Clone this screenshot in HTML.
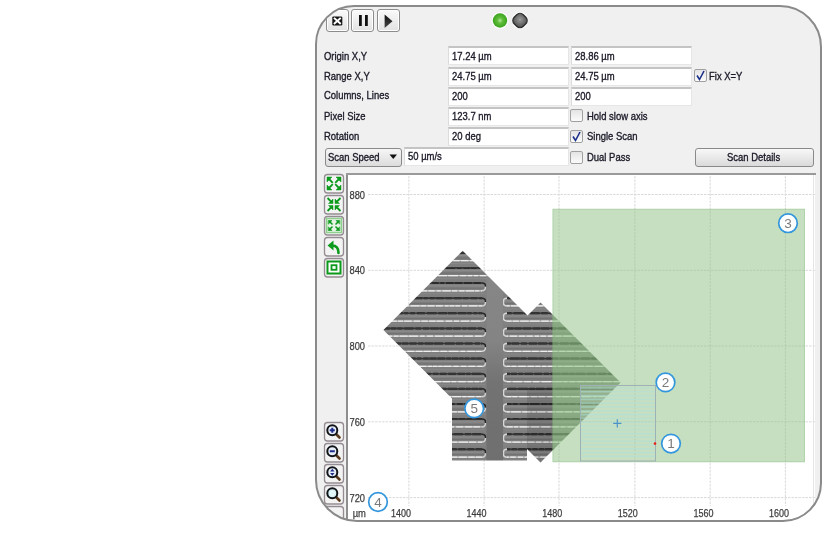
<!DOCTYPE html>
<html><head><meta charset="utf-8">
<style>
*{box-sizing:border-box}
html,body{margin:0;padding:0;background:#fff;width:840px;height:550px;overflow:hidden}
#wrap{position:absolute;left:0;top:0;width:840px;height:550px;filter:blur(0.35px)}
body{font-family:"Liberation Sans",sans-serif;position:relative}
#clip{position:absolute;left:0;top:0;width:840px;height:550px;clip-path:inset(6px 19px 29px 316px round 39px 42px 39px 42px);background:#f0f0f0}
.a{position:absolute}
.t{position:absolute;font-size:11px;line-height:11px;color:#1a1a28;-webkit-text-stroke:0.35px #1a1a28;white-space:nowrap;transform:scaleX(.86);transform-origin:0 0}
.inp{position:absolute;background:#fff;border-top:2px solid #c4c4c4;border-left:1px solid #dcdcdc;border-right:1px solid #e6e6e6;border-bottom:1px solid #e6e6e6;height:19px;width:121px}
.cb{position:absolute;width:13px;height:13px;border:1px solid #a0a0a0;border-radius:2px;background:linear-gradient(#e4e4e4,#fbfbfb)}
.btn{position:absolute;width:23px;height:23px;border:1px solid #8c8c8c;border-radius:3px;background:linear-gradient(#fafafa,#e2e2e2);box-shadow:inset 0 0 0 1px #fff}
.tb{position:absolute;left:324px;width:20px;height:19px;border:1px solid #9a8f98;border-radius:3px;background:#f4f4f4}
#frame{position:absolute;left:315px;top:5px;width:507px;height:517px;border:2px solid #8a8a8a;border-radius:39px 42px 39px 42px}
</style></head>
<body>
<div id="wrap">
<div id="clip">
  <!-- top buttons -->
  <div class="btn" style="left:326px;top:9px"></div>
  <div class="btn" style="left:351px;top:9px"></div>
  <div class="btn" style="left:377px;top:9px"></div>
  <svg class="a" style="left:326px;top:9px" width="75" height="24" viewBox="0 0 75 24">
    <defs><linearGradient id="pg" x1="0" y1="0" x2="0" y2="1"><stop offset="0" stop-color="#111"/><stop offset="1" stop-color="#444"/></linearGradient></defs>
    <rect x="6.3" y="7.4" width="10" height="9" rx="1.2" fill="#161616"/>
    <path d="M8.6 9.5 L14 14.3 M14 9.5 L8.6 14.3" stroke="#fff" stroke-width="1.9" stroke-linecap="square"/>
    <rect x="33" y="6" width="2.8" height="11" fill="#111"/>
    <rect x="39" y="6" width="2.8" height="11" fill="#111"/>
    <path d="M58.6 5.4 L66.5 12.2 L58.6 19 Z" fill="url(#pg)"/>
  </svg>
  <!-- leds -->
  <svg class="a" style="left:490px;top:10px" width="40" height="22" viewBox="0 0 40 22">
    <defs><radialGradient id="lg" cx="0.5" cy="0.5" r="0.5"><stop offset="0" stop-color="#b8e6a8"/><stop offset="0.35" stop-color="#62c03c"/><stop offset="1" stop-color="#3aa21e"/></radialGradient>
    <radialGradient id="gg" cx="0.45" cy="0.45" r="0.55"><stop offset="0" stop-color="#9a9a9a"/><stop offset="1" stop-color="#555"/></radialGradient></defs>
    <circle cx="10" cy="10.5" r="8.6" fill="#fbfbfb"/>
    <circle cx="10" cy="10.5" r="7.2" fill="url(#lg)"/>
    <circle cx="30" cy="10.5" r="8.4" fill="#fbfbfb"/>
    <rect x="23.6" y="4.1" width="12.8" height="12.8" rx="4.6" transform="rotate(45 30 10.5)" fill="url(#gg)" stroke="#2a2a2a" stroke-width="1.3"/>
  </svg>

  <!-- labels -->
  <div class="t" style="left:324px;top:50.5px">Origin X,Y</div>
  <div class="t" style="left:324px;top:70.5px">Range X,Y</div>
  <div class="t" style="left:324px;top:90px">Columns, Lines</div>
  <div class="t" style="left:324px;top:110.5px">Pixel Size</div>
  <div class="t" style="left:324px;top:130.5px">Rotation</div>

  <!-- inputs -->
  <div class="inp" style="left:448px;top:46px"></div>
  <div class="inp" style="left:571px;top:46px"></div>
  <div class="inp" style="left:448px;top:66.5px"></div>
  <div class="inp" style="left:571px;top:66.5px"></div>
  <div class="inp" style="left:448px;top:87px"></div>
  <div class="inp" style="left:571px;top:87px"></div>
  <div class="inp" style="left:448px;top:106.5px"></div>
  <div class="inp" style="left:448px;top:127px"></div>
  <div class="inp" style="left:404px;top:147px;width:165px"></div>

  <div class="t" style="left:452px;top:50.5px">17.24 µm</div>
  <div class="t" style="left:575px;top:50.5px">28.86 µm</div>
  <div class="t" style="left:452px;top:70.5px">24.75 µm</div>
  <div class="t" style="left:575px;top:70.5px">24.75 µm</div>
  <div class="t" style="left:452px;top:90.5px">200</div>
  <div class="t" style="left:575px;top:90.5px">200</div>
  <div class="t" style="left:452px;top:110.5px">123.7 nm</div>
  <div class="t" style="left:452px;top:130.5px">20 deg</div>
  <div class="t" style="left:408px;top:151px">50 µm/s</div>

  <!-- dropdown -->
  <div class="a" style="left:325px;top:147.5px;width:77px;height:19px;border:1px solid #8a8a8a;border-radius:3px;background:linear-gradient(#f6f6f6,#dcdcdc)"></div>
  <div class="t" style="left:328px;top:151.5px">Scan Speed</div>
  <svg class="a" style="left:389px;top:154px" width="9" height="6"><path d="M0.5 0.5 L8 0.5 L4.25 5 Z" fill="#111"/></svg>

  <!-- checkboxes -->
  <div class="cb" style="left:694px;top:69px"></div>
  <div class="t" style="left:709px;top:70.5px">Fix X=Y</div>
  <div class="cb" style="left:570px;top:109px"></div>
  <div class="t" style="left:587px;top:110.5px">Hold slow axis</div>
  <div class="cb" style="left:570px;top:129.5px"></div>
  <div class="t" style="left:587px;top:130.5px">Single Scan</div>
  <div class="cb" style="left:570px;top:151px"></div>
  <div class="t" style="left:587px;top:151.5px">Dual Pass</div>
  <svg class="a" style="left:694px;top:69px" width="13" height="13"><path d="M3 6.5 L5.5 10.5 L10 2" stroke="#1a2f8a" stroke-width="1.6" fill="none"/></svg>
  <svg class="a" style="left:570px;top:129.5px" width="13" height="13"><path d="M3 6.5 L5.5 10.5 L10 2" stroke="#1a2f8a" stroke-width="1.6" fill="none"/></svg>

  <!-- scan details -->
  <div class="a" style="left:695px;top:148px;width:119px;height:19px;border:1px solid #8a8a8a;border-radius:3px;background:linear-gradient(#f8f8f8,#dadada)"></div>
  <div class="t" style="left:727px;top:151.5px">Scan Details</div>

  <!-- plot separator -->
  <div class="a" style="left:346px;top:173px;width:470px;height:2px;background:#9a9a9a"></div>
  <!-- plot area -->
  <div class="a" style="left:346px;top:175px;width:469px;height:360px;background:#fff;border-left:2px solid #8e8e8e"></div>

  <!-- PLOT SVG -->
  <svg class="a" style="left:0;top:0" width="840" height="550" viewBox="0 0 840 550" id="plot">
<g stroke="#dadada" stroke-width="1" stroke-dasharray="2.5 1" fill="none">
<line x1="408.9" y1="176" x2="408.9" y2="506"/>
<line x1="484.1" y1="176" x2="484.1" y2="506"/>
<line x1="559.0" y1="176" x2="559.0" y2="506"/>
<line x1="634.9" y1="176" x2="634.9" y2="506"/>
<line x1="710.2" y1="176" x2="710.2" y2="506"/>
<line x1="785.4" y1="176" x2="785.4" y2="506"/>
<line x1="368" y1="194.5" x2="815" y2="194.5"/>
<line x1="368" y1="270.3" x2="815" y2="270.3"/>
<line x1="368" y1="346.0" x2="815" y2="346.0"/>
<line x1="368" y1="421.8" x2="815" y2="421.8"/>
<line x1="368" y1="497.6" x2="815" y2="497.6"/>
</g>
<defs><clipPath id="semclip"><polygon points="383.4,330 462.7,250.7 527.55,315.55 540.5,302.6 620.5,382.6 540.5,462.6 527,449.1 527,460.5 452,460.5 452,398.6"/></clipPath>
<filter id="bl" x="-5%" y="-5%" width="110%" height="110%"><feGaussianBlur stdDeviation="0.45"/></filter></defs>
<g clip-path="url(#semclip)"><g filter="url(#bl)">
<rect x="375" y="245" width="255" height="222" fill="#7f7f7f"/>
<rect x="375" y="254.98" width="255" height="1.2" fill="#8c8c8c"/>
<rect x="375" y="257.40" width="255" height="1.2" fill="#727272"/>
<rect x="375" y="263.00" width="255" height="1" fill="#888888"/>
<line x1="375" y1="252.78" x2="630" y2="252.78" stroke="#161616" stroke-width="2" stroke-dasharray="5.4 1.6 6.2 1.6 7.8 0.9 4.1 2.0 5.6 1.1 10.0 1.5 9.0 1.5 7.8 1.0 7.8 2.0 7.1 1.8 8.0 0.9 8.5 1.6" stroke-dashoffset="3.0"/>
<line x1="375" y1="252.78" x2="630" y2="252.78" stroke="#343434" stroke-width="1.6"/>
<line x1="375" y1="260.60" x2="630" y2="260.60" stroke="#c8c8c8" stroke-width="1.2"/>
<line x1="375" y1="260.60" x2="630" y2="260.60" stroke="#eeeeee" stroke-width="1.2" stroke-dasharray="4.2 2.0 6.8 1.8 9.3 1.8 9.5 1.4 8.8 1.4 9.6 2.0 4.6 1.0 5.3 2.2 6.6 1.7 5.8 1.5 6.3 1.3 7.5 1.6" stroke-dashoffset="9.0"/>
<rect x="375" y="270.10" width="255" height="1.2" fill="#8c8c8c"/>
<rect x="375" y="272.52" width="255" height="1.2" fill="#727272"/>
<rect x="375" y="278.12" width="255" height="1" fill="#888888"/>
<line x1="375" y1="267.90" x2="630" y2="267.90" stroke="#161616" stroke-width="2" stroke-dasharray="8.1 2.1 9.1 2.2 8.0 1.0 9.2 2.2 9.4 1.6 8.3 1.1 9.0 1.6 5.7 0.9 9.1 2.2 4.5 1.9 6.5 1.0 5.8 1.9" stroke-dashoffset="8.7"/>
<line x1="375" y1="267.90" x2="630" y2="267.90" stroke="#343434" stroke-width="1.6"/>
<line x1="375" y1="275.72" x2="630" y2="275.72" stroke="#c8c8c8" stroke-width="1.2"/>
<line x1="375" y1="275.72" x2="630" y2="275.72" stroke="#eeeeee" stroke-width="1.2" stroke-dasharray="4.3 1.7 4.3 1.8 6.0 2.0 9.9 1.5 10.0 1.2 4.5 1.6 4.2 1.1 6.4 1.7 4.9 0.9 9.2 1.2 9.8 2.1 6.3 1.4" stroke-dashoffset="5.2"/>
<rect x="375" y="285.22" width="110.5" height="1.2" fill="#8c8c8c"/>
<rect x="375" y="287.64" width="110.5" height="1.2" fill="#727272"/>
<rect x="375" y="293.24" width="110.5" height="1" fill="#888888"/>
<rect x="503.5" y="285.22" width="126.5" height="1.2" fill="#8c8c8c"/>
<rect x="503.5" y="287.64" width="126.5" height="1.2" fill="#727272"/>
<rect x="503.5" y="293.24" width="126.5" height="1" fill="#888888"/>
<line x1="375" y1="283.02" x2="482" y2="283.02" stroke="#161616" stroke-width="2" stroke-dasharray="7.9 1.6 7.4 1.7 9.6 1.5 6.6 1.8 5.4 1.2 9.9 1.5 7.3 0.8 6.5 1.6 4.1 1.7 7.8 0.9 7.8 1.5 8.1 1.3" stroke-dashoffset="7.1"/>
<line x1="375" y1="283.02" x2="482" y2="283.02" stroke="#343434" stroke-width="1.6"/>
<line x1="375" y1="290.84" x2="482" y2="290.84" stroke="#c8c8c8" stroke-width="1.2"/>
<line x1="375" y1="290.84" x2="482" y2="290.84" stroke="#eeeeee" stroke-width="1.2" stroke-dasharray="8.4 0.8 4.4 1.7 9.8 1.2 6.7 1.6 5.9 1.3 5.9 1.3 7.6 1.2 6.3 1.9 4.2 1.6 8.4 1.2 5.3 1.9 5.4 1.1" stroke-dashoffset="4.4"/>
<line x1="507" y1="283.02" x2="630" y2="283.02" stroke="#161616" stroke-width="2" stroke-dasharray="8.2 0.9 5.9 1.3 9.0 1.4 9.1 1.0 6.0 1.7 9.3 1.4 5.4 1.0 7.2 1.1 8.8 2.0 5.1 1.2 8.8 1.7 8.8 1.3" stroke-dashoffset="1.3"/>
<line x1="507" y1="283.02" x2="630" y2="283.02" stroke="#343434" stroke-width="1.6"/>
<line x1="507" y1="290.84" x2="630" y2="290.84" stroke="#c8c8c8" stroke-width="1.2"/>
<line x1="507" y1="290.84" x2="630" y2="290.84" stroke="#eeeeee" stroke-width="1.2" stroke-dasharray="5.8 1.9 5.6 1.3 6.5 1.4 6.5 2.1 4.9 0.8 9.7 2.0 9.9 1.4 9.7 2.1 5.3 1.8 9.0 1.7 7.1 1.2 6.0 1.1" stroke-dashoffset="0.7"/>
<path d="M482 283.02 Q485.5 283.02 485.5 286.02 L485.5 286.84" stroke="#262626" stroke-width="1.5" fill="none"/>
<path d="M485.5 286.84 Q485.5 290.84 482 290.84" stroke="#d0d0d0" stroke-width="1.5" fill="none"/>
<path d="M507 283.02 Q503.5 283.02 503.5 286.02 L503.5 287.84 Q503.5 290.84 507 290.84" stroke="#d6d6d6" stroke-width="1.5" fill="none"/>
<rect x="375" y="300.34" width="110.5" height="1.2" fill="#8c8c8c"/>
<rect x="375" y="302.76" width="110.5" height="1.2" fill="#727272"/>
<rect x="375" y="308.36" width="110.5" height="1" fill="#888888"/>
<rect x="503.5" y="300.34" width="126.5" height="1.2" fill="#8c8c8c"/>
<rect x="503.5" y="302.76" width="126.5" height="1.2" fill="#727272"/>
<rect x="503.5" y="308.36" width="126.5" height="1" fill="#888888"/>
<line x1="375" y1="298.14" x2="482" y2="298.14" stroke="#161616" stroke-width="2" stroke-dasharray="7.5 1.2 8.9 0.9 9.4 1.8 9.5 2.1 9.4 1.6 4.1 1.8 5.0 1.2 8.0 1.5 6.5 2.1 7.7 1.3 5.5 2.0 6.9 1.9" stroke-dashoffset="3.5"/>
<line x1="375" y1="298.14" x2="482" y2="298.14" stroke="#343434" stroke-width="1.6"/>
<line x1="375" y1="305.96" x2="482" y2="305.96" stroke="#c8c8c8" stroke-width="1.2"/>
<line x1="375" y1="305.96" x2="482" y2="305.96" stroke="#eeeeee" stroke-width="1.2" stroke-dasharray="5.2 1.5 8.9 1.0 8.8 2.1 8.8 2.0 4.0 1.7 9.2 0.9 5.6 1.2 7.2 1.4 6.8 1.9 4.0 0.9 4.8 1.0 4.4 2.2" stroke-dashoffset="8.5"/>
<line x1="507" y1="298.14" x2="630" y2="298.14" stroke="#161616" stroke-width="2" stroke-dasharray="4.5 1.5 5.9 1.2 6.1 1.7 7.5 1.3 5.1 1.3 4.7 1.6 8.3 1.3 4.5 1.0 6.2 1.6 8.7 1.3 8.8 1.7 6.6 1.3" stroke-dashoffset="5.0"/>
<line x1="507" y1="298.14" x2="630" y2="298.14" stroke="#343434" stroke-width="1.6"/>
<line x1="507" y1="305.96" x2="630" y2="305.96" stroke="#c8c8c8" stroke-width="1.2"/>
<line x1="507" y1="305.96" x2="630" y2="305.96" stroke="#eeeeee" stroke-width="1.2" stroke-dasharray="8.2 1.4 8.2 1.4 5.5 1.6 8.2 0.9 6.5 1.4 9.3 2.1 6.2 2.1 8.7 1.2 6.8 1.0 8.9 1.7 9.3 1.9 8.0 1.8" stroke-dashoffset="5.6"/>
<path d="M482 298.14 Q485.5 298.14 485.5 301.14 L485.5 301.96" stroke="#262626" stroke-width="1.5" fill="none"/>
<path d="M485.5 301.96 Q485.5 305.96 482 305.96" stroke="#d0d0d0" stroke-width="1.5" fill="none"/>
<path d="M507 298.14 Q503.5 298.14 503.5 301.14 L503.5 302.96 Q503.5 305.96 507 305.96" stroke="#d6d6d6" stroke-width="1.5" fill="none"/>
<rect x="375" y="315.46" width="110.5" height="1.2" fill="#8c8c8c"/>
<rect x="375" y="317.88" width="110.5" height="1.2" fill="#727272"/>
<rect x="375" y="323.48" width="110.5" height="1" fill="#888888"/>
<rect x="503.5" y="315.46" width="126.5" height="1.2" fill="#8c8c8c"/>
<rect x="503.5" y="317.88" width="126.5" height="1.2" fill="#727272"/>
<rect x="503.5" y="323.48" width="126.5" height="1" fill="#888888"/>
<line x1="375" y1="313.26" x2="482" y2="313.26" stroke="#161616" stroke-width="2" stroke-dasharray="4.6 1.6 4.0 1.0 8.6 0.9 4.6 0.9 9.3 1.1 4.1 2.0 4.7 2.0 8.0 2.0 9.7 1.6 8.8 0.9 8.6 1.5 8.3 0.9" stroke-dashoffset="7.5"/>
<line x1="375" y1="313.26" x2="482" y2="313.26" stroke="#343434" stroke-width="1.6"/>
<line x1="375" y1="321.08" x2="482" y2="321.08" stroke="#c8c8c8" stroke-width="1.2"/>
<line x1="375" y1="321.08" x2="482" y2="321.08" stroke="#eeeeee" stroke-width="1.2" stroke-dasharray="9.6 0.9 5.9 1.6 9.0 1.1 5.1 1.1 7.7 1.9 6.4 1.3 6.4 1.3 6.5 0.9 7.0 2.2 6.5 1.8 5.0 1.8 8.5 1.7" stroke-dashoffset="5.2"/>
<line x1="507" y1="313.26" x2="630" y2="313.26" stroke="#161616" stroke-width="2" stroke-dasharray="6.9 1.7 9.4 1.0 4.6 1.8 9.5 1.5 6.7 1.8 5.1 1.2 5.2 1.6 5.9 1.1 8.1 2.1 5.8 1.8 6.5 2.0 7.5 1.2" stroke-dashoffset="2.2"/>
<line x1="507" y1="313.26" x2="630" y2="313.26" stroke="#343434" stroke-width="1.6"/>
<line x1="507" y1="321.08" x2="630" y2="321.08" stroke="#c8c8c8" stroke-width="1.2"/>
<line x1="507" y1="321.08" x2="630" y2="321.08" stroke="#eeeeee" stroke-width="1.2" stroke-dasharray="4.1 1.5 6.3 1.0 6.2 1.3 8.6 1.0 9.9 1.5 7.6 1.5 9.0 2.0 7.3 1.5 8.3 2.0 6.4 1.8 9.8 1.5 5.4 1.1" stroke-dashoffset="7.2"/>
<path d="M482 313.26 Q485.5 313.26 485.5 316.26 L485.5 317.08" stroke="#262626" stroke-width="1.5" fill="none"/>
<path d="M485.5 317.08 Q485.5 321.08 482 321.08" stroke="#d0d0d0" stroke-width="1.5" fill="none"/>
<path d="M507 313.26 Q503.5 313.26 503.5 316.26 L503.5 318.08 Q503.5 321.08 507 321.08" stroke="#d6d6d6" stroke-width="1.5" fill="none"/>
<rect x="375" y="330.58" width="110.5" height="1.2" fill="#8c8c8c"/>
<rect x="375" y="333.00" width="110.5" height="1.2" fill="#727272"/>
<rect x="375" y="338.60" width="110.5" height="1" fill="#888888"/>
<rect x="503.5" y="330.58" width="126.5" height="1.2" fill="#8c8c8c"/>
<rect x="503.5" y="333.00" width="126.5" height="1.2" fill="#727272"/>
<rect x="503.5" y="338.60" width="126.5" height="1" fill="#888888"/>
<line x1="375" y1="328.38" x2="482" y2="328.38" stroke="#161616" stroke-width="2" stroke-dasharray="8.1 2.1 9.1 1.1 5.1 1.2 5.1 1.8 9.2 2.1 5.5 2.0 5.9 1.4 8.4 0.9 4.6 2.0 5.8 1.3 7.5 1.7 4.0 1.3" stroke-dashoffset="4.4"/>
<line x1="375" y1="328.38" x2="482" y2="328.38" stroke="#343434" stroke-width="1.6"/>
<line x1="375" y1="336.20" x2="482" y2="336.20" stroke="#c8c8c8" stroke-width="1.2"/>
<line x1="375" y1="336.20" x2="482" y2="336.20" stroke="#eeeeee" stroke-width="1.2" stroke-dasharray="6.9 1.1 7.5 2.1 6.3 1.6 4.7 1.2 8.0 1.0 9.3 2.1 4.6 2.1 6.2 1.9 8.5 1.2 8.1 1.7 8.8 1.2 8.5 2.1" stroke-dashoffset="6.7"/>
<line x1="507" y1="328.38" x2="630" y2="328.38" stroke="#161616" stroke-width="2" stroke-dasharray="7.2 1.0 7.0 1.3 8.3 1.7 7.4 1.1 7.9 1.7 5.1 2.0 7.9 1.0 9.6 1.0 6.0 1.8 7.6 1.6 7.9 1.4 5.9 1.0" stroke-dashoffset="0.7"/>
<line x1="507" y1="328.38" x2="630" y2="328.38" stroke="#343434" stroke-width="1.6"/>
<line x1="507" y1="336.20" x2="630" y2="336.20" stroke="#c8c8c8" stroke-width="1.2"/>
<line x1="507" y1="336.20" x2="630" y2="336.20" stroke="#eeeeee" stroke-width="1.2" stroke-dasharray="8.3 1.9 7.3 1.8 6.2 1.2 6.3 2.0 4.3 1.5 5.5 1.9 6.1 1.3 6.4 1.6 8.6 1.3 9.1 1.0 5.6 0.9 4.7 1.9" stroke-dashoffset="7.3"/>
<path d="M482 328.38 Q485.5 328.38 485.5 331.38 L485.5 332.20" stroke="#262626" stroke-width="1.5" fill="none"/>
<path d="M485.5 332.20 Q485.5 336.20 482 336.20" stroke="#d0d0d0" stroke-width="1.5" fill="none"/>
<path d="M507 328.38 Q503.5 328.38 503.5 331.38 L503.5 333.20 Q503.5 336.20 507 336.20" stroke="#d6d6d6" stroke-width="1.5" fill="none"/>
<rect x="375" y="345.70" width="110.5" height="1.2" fill="#8c8c8c"/>
<rect x="375" y="348.12" width="110.5" height="1.2" fill="#727272"/>
<rect x="375" y="353.72" width="110.5" height="1" fill="#888888"/>
<rect x="503.5" y="345.70" width="126.5" height="1.2" fill="#8c8c8c"/>
<rect x="503.5" y="348.12" width="126.5" height="1.2" fill="#727272"/>
<rect x="503.5" y="353.72" width="126.5" height="1" fill="#888888"/>
<line x1="375" y1="343.50" x2="482" y2="343.50" stroke="#161616" stroke-width="2" stroke-dasharray="5.1 1.1 6.5 1.8 8.9 1.8 7.6 1.0 6.4 1.1 7.2 1.6 5.2 1.2 8.7 0.8 8.8 2.0 9.7 1.3 7.3 1.6 7.8 2.2" stroke-dashoffset="6.9"/>
<line x1="375" y1="343.50" x2="482" y2="343.50" stroke="#343434" stroke-width="1.6"/>
<line x1="375" y1="351.32" x2="482" y2="351.32" stroke="#c8c8c8" stroke-width="1.2"/>
<line x1="375" y1="351.32" x2="482" y2="351.32" stroke="#eeeeee" stroke-width="1.2" stroke-dasharray="5.8 2.0 6.9 1.6 8.4 0.8 8.6 1.7 7.0 1.5 6.8 1.1 7.2 0.9 7.0 1.7 6.7 1.6 9.8 2.0 4.8 1.9 7.7 0.9" stroke-dashoffset="3.6"/>
<line x1="507" y1="343.50" x2="630" y2="343.50" stroke="#161616" stroke-width="2" stroke-dasharray="5.4 0.9 7.2 2.1 5.9 2.0 8.2 1.0 9.1 1.6 9.6 1.8 8.4 1.3 8.8 2.1 9.2 1.4 8.5 1.5 4.7 0.9 4.5 1.1" stroke-dashoffset="1.6"/>
<line x1="507" y1="343.50" x2="630" y2="343.50" stroke="#343434" stroke-width="1.6"/>
<line x1="507" y1="351.32" x2="630" y2="351.32" stroke="#c8c8c8" stroke-width="1.2"/>
<line x1="507" y1="351.32" x2="630" y2="351.32" stroke="#eeeeee" stroke-width="1.2" stroke-dasharray="7.0 1.8 7.2 1.4 7.9 1.2 6.8 1.9 6.4 1.1 9.4 1.8 6.2 1.3 7.2 1.6 5.3 0.8 5.3 1.9 4.9 1.4 5.2 1.1" stroke-dashoffset="1.7"/>
<path d="M482 343.50 Q485.5 343.50 485.5 346.50 L485.5 347.32" stroke="#262626" stroke-width="1.5" fill="none"/>
<path d="M485.5 347.32 Q485.5 351.32 482 351.32" stroke="#d0d0d0" stroke-width="1.5" fill="none"/>
<path d="M507 343.50 Q503.5 343.50 503.5 346.50 L503.5 348.32 Q503.5 351.32 507 351.32" stroke="#d6d6d6" stroke-width="1.5" fill="none"/>
<rect x="375" y="360.82" width="110.5" height="1.2" fill="#8c8c8c"/>
<rect x="375" y="363.24" width="110.5" height="1.2" fill="#727272"/>
<rect x="375" y="368.84" width="110.5" height="1" fill="#888888"/>
<rect x="503.5" y="360.82" width="126.5" height="1.2" fill="#8c8c8c"/>
<rect x="503.5" y="363.24" width="126.5" height="1.2" fill="#727272"/>
<rect x="503.5" y="368.84" width="126.5" height="1" fill="#888888"/>
<line x1="375" y1="358.62" x2="482" y2="358.62" stroke="#161616" stroke-width="2" stroke-dasharray="6.4 1.0 4.2 1.0 5.0 1.5 4.4 0.8 6.7 1.4 8.2 0.9 6.4 1.4 4.2 2.2 5.3 0.9 6.8 1.0 7.7 1.3 4.7 0.9" stroke-dashoffset="7.3"/>
<line x1="375" y1="358.62" x2="482" y2="358.62" stroke="#343434" stroke-width="1.6"/>
<line x1="375" y1="366.44" x2="482" y2="366.44" stroke="#c8c8c8" stroke-width="1.2"/>
<line x1="375" y1="366.44" x2="482" y2="366.44" stroke="#eeeeee" stroke-width="1.2" stroke-dasharray="5.7 1.9 6.8 2.1 5.8 1.1 5.6 1.9 7.8 1.3 4.6 1.8 9.8 1.6 4.0 0.8 4.5 1.0 4.2 0.9 7.9 2.1 5.2 2.2" stroke-dashoffset="4.8"/>
<line x1="507" y1="358.62" x2="630" y2="358.62" stroke="#161616" stroke-width="2" stroke-dasharray="8.8 2.1 9.6 0.8 5.8 1.6 9.7 0.9 5.8 2.0 4.7 1.3 6.0 1.8 9.6 1.0 8.4 1.8 9.0 1.6 9.5 1.3 6.5 1.1" stroke-dashoffset="7.8"/>
<line x1="507" y1="358.62" x2="630" y2="358.62" stroke="#343434" stroke-width="1.6"/>
<line x1="507" y1="366.44" x2="630" y2="366.44" stroke="#c8c8c8" stroke-width="1.2"/>
<line x1="507" y1="366.44" x2="630" y2="366.44" stroke="#eeeeee" stroke-width="1.2" stroke-dasharray="6.9 1.2 5.0 1.8 7.6 1.8 6.3 1.5 4.9 1.8 4.1 1.5 8.6 1.7 4.6 1.1 9.1 1.7 9.3 2.0 6.7 2.1 8.4 1.3" stroke-dashoffset="3.7"/>
<path d="M482 358.62 Q485.5 358.62 485.5 361.62 L485.5 362.44" stroke="#262626" stroke-width="1.5" fill="none"/>
<path d="M485.5 362.44 Q485.5 366.44 482 366.44" stroke="#d0d0d0" stroke-width="1.5" fill="none"/>
<path d="M507 358.62 Q503.5 358.62 503.5 361.62 L503.5 363.44 Q503.5 366.44 507 366.44" stroke="#d6d6d6" stroke-width="1.5" fill="none"/>
<rect x="375" y="375.94" width="110.5" height="1.2" fill="#8c8c8c"/>
<rect x="375" y="378.36" width="110.5" height="1.2" fill="#727272"/>
<rect x="375" y="383.96" width="110.5" height="1" fill="#888888"/>
<rect x="503.5" y="375.94" width="126.5" height="1.2" fill="#8c8c8c"/>
<rect x="503.5" y="378.36" width="126.5" height="1.2" fill="#727272"/>
<rect x="503.5" y="383.96" width="126.5" height="1" fill="#888888"/>
<line x1="375" y1="373.74" x2="482" y2="373.74" stroke="#161616" stroke-width="2" stroke-dasharray="4.4 1.4 9.7 0.9 7.4 1.0 4.5 1.7 5.4 0.9 4.9 1.7 7.5 0.8 5.4 2.2 5.3 1.6 6.5 1.9 7.6 1.9 7.2 1.1" stroke-dashoffset="1.8"/>
<line x1="375" y1="373.74" x2="482" y2="373.74" stroke="#343434" stroke-width="1.6"/>
<line x1="375" y1="381.56" x2="482" y2="381.56" stroke="#c8c8c8" stroke-width="1.2"/>
<line x1="375" y1="381.56" x2="482" y2="381.56" stroke="#eeeeee" stroke-width="1.2" stroke-dasharray="4.5 2.0 4.7 0.8 9.8 1.1 9.4 0.9 6.8 1.1 9.0 1.7 7.9 1.9 9.2 1.3 7.6 1.4 4.7 2.0 7.6 1.9 5.2 1.6" stroke-dashoffset="4.6"/>
<line x1="507" y1="373.74" x2="630" y2="373.74" stroke="#161616" stroke-width="2" stroke-dasharray="8.4 0.9 6.1 1.5 4.4 1.6 8.4 1.4 7.9 1.6 5.3 1.3 10.0 1.3 6.6 0.9 5.3 1.0 9.6 1.8 9.2 2.2 7.7 2.1" stroke-dashoffset="5.4"/>
<line x1="507" y1="373.74" x2="630" y2="373.74" stroke="#343434" stroke-width="1.6"/>
<line x1="507" y1="381.56" x2="630" y2="381.56" stroke="#c8c8c8" stroke-width="1.2"/>
<line x1="507" y1="381.56" x2="630" y2="381.56" stroke="#eeeeee" stroke-width="1.2" stroke-dasharray="6.5 2.1 9.4 2.1 6.9 1.9 6.4 2.2 9.5 1.2 9.6 1.1 4.6 1.8 5.8 1.5 7.8 0.9 8.5 1.2 6.6 1.3 8.5 1.8" stroke-dashoffset="2.9"/>
<path d="M482 373.74 Q485.5 373.74 485.5 376.74 L485.5 377.56" stroke="#262626" stroke-width="1.5" fill="none"/>
<path d="M485.5 377.56 Q485.5 381.56 482 381.56" stroke="#d0d0d0" stroke-width="1.5" fill="none"/>
<path d="M507 373.74 Q503.5 373.74 503.5 376.74 L503.5 378.56 Q503.5 381.56 507 381.56" stroke="#d6d6d6" stroke-width="1.5" fill="none"/>
<rect x="375" y="391.06" width="110.5" height="1.2" fill="#8c8c8c"/>
<rect x="375" y="393.48" width="110.5" height="1.2" fill="#727272"/>
<rect x="375" y="399.08" width="110.5" height="1" fill="#888888"/>
<rect x="503.5" y="391.06" width="126.5" height="1.2" fill="#8c8c8c"/>
<rect x="503.5" y="393.48" width="126.5" height="1.2" fill="#727272"/>
<rect x="503.5" y="399.08" width="126.5" height="1" fill="#888888"/>
<line x1="375" y1="388.86" x2="482" y2="388.86" stroke="#161616" stroke-width="2" stroke-dasharray="4.6 1.2 6.5 0.9 4.9 1.9 8.2 2.2 9.9 2.0 6.2 1.0 5.9 1.4 7.2 1.6 6.2 2.0 5.7 1.4 9.3 1.9 5.8 1.1" stroke-dashoffset="8.1"/>
<line x1="375" y1="388.86" x2="482" y2="388.86" stroke="#343434" stroke-width="1.6"/>
<line x1="375" y1="396.68" x2="482" y2="396.68" stroke="#c8c8c8" stroke-width="1.2"/>
<line x1="375" y1="396.68" x2="482" y2="396.68" stroke="#eeeeee" stroke-width="1.2" stroke-dasharray="4.1 1.0 7.2 1.6 5.0 0.9 5.2 1.9 6.8 2.2 8.7 2.2 4.2 1.1 4.1 1.4 6.0 0.9 7.3 0.9 5.9 1.1 8.8 1.4" stroke-dashoffset="2.6"/>
<line x1="507" y1="388.86" x2="630" y2="388.86" stroke="#161616" stroke-width="2" stroke-dasharray="4.3 1.4 7.8 1.7 9.5 1.9 5.5 1.0 8.5 1.9 7.1 2.0 7.3 1.2 5.0 0.8 7.9 2.1 9.4 1.5 8.0 2.1 8.9 1.6" stroke-dashoffset="4.1"/>
<line x1="507" y1="388.86" x2="630" y2="388.86" stroke="#343434" stroke-width="1.6"/>
<line x1="507" y1="396.68" x2="630" y2="396.68" stroke="#c8c8c8" stroke-width="1.2"/>
<line x1="507" y1="396.68" x2="630" y2="396.68" stroke="#eeeeee" stroke-width="1.2" stroke-dasharray="7.1 1.0 5.1 1.8 10.0 1.6 6.4 1.3 6.7 1.9 6.7 2.1 4.9 1.2 7.1 1.4 9.1 2.0 9.6 1.7 4.2 1.6 7.3 1.5" stroke-dashoffset="2.8"/>
<path d="M482 388.86 Q485.5 388.86 485.5 391.86 L485.5 392.68" stroke="#262626" stroke-width="1.5" fill="none"/>
<path d="M485.5 392.68 Q485.5 396.68 482 396.68" stroke="#d0d0d0" stroke-width="1.5" fill="none"/>
<path d="M507 388.86 Q503.5 388.86 503.5 391.86 L503.5 393.68 Q503.5 396.68 507 396.68" stroke="#d6d6d6" stroke-width="1.5" fill="none"/>
<rect x="375" y="406.18" width="110.5" height="1.2" fill="#8c8c8c"/>
<rect x="375" y="408.60" width="110.5" height="1.2" fill="#727272"/>
<rect x="375" y="414.20" width="110.5" height="1" fill="#888888"/>
<rect x="503.5" y="406.18" width="126.5" height="1.2" fill="#8c8c8c"/>
<rect x="503.5" y="408.60" width="126.5" height="1.2" fill="#727272"/>
<rect x="503.5" y="414.20" width="126.5" height="1" fill="#888888"/>
<line x1="375" y1="403.98" x2="482" y2="403.98" stroke="#161616" stroke-width="2" stroke-dasharray="8.3 2.1 4.6 1.7 6.2 1.5 9.4 2.1 7.9 1.1 9.5 1.1 6.3 2.0 5.9 1.2 9.7 2.1 5.9 1.3 5.7 1.0 5.5 2.2" stroke-dashoffset="0.8"/>
<line x1="375" y1="403.98" x2="482" y2="403.98" stroke="#343434" stroke-width="1.6"/>
<line x1="375" y1="411.80" x2="482" y2="411.80" stroke="#c8c8c8" stroke-width="1.2"/>
<line x1="375" y1="411.80" x2="482" y2="411.80" stroke="#eeeeee" stroke-width="1.2" stroke-dasharray="5.4 1.1 4.5 1.5 8.5 2.0 7.8 1.9 4.0 1.2 9.8 0.9 5.6 1.5 5.6 1.6 4.3 1.1 9.7 1.0 9.4 1.0 10.0 1.7" stroke-dashoffset="6.5"/>
<line x1="507" y1="403.98" x2="630" y2="403.98" stroke="#161616" stroke-width="2" stroke-dasharray="4.9 0.9 8.6 1.0 5.1 2.0 9.2 0.9 9.8 1.5 6.3 0.9 6.3 2.2 5.7 1.0 4.9 1.0 6.1 2.1 4.5 1.1 9.6 2.2" stroke-dashoffset="9.8"/>
<line x1="507" y1="403.98" x2="630" y2="403.98" stroke="#343434" stroke-width="1.6"/>
<line x1="507" y1="411.80" x2="630" y2="411.80" stroke="#c8c8c8" stroke-width="1.2"/>
<line x1="507" y1="411.80" x2="630" y2="411.80" stroke="#eeeeee" stroke-width="1.2" stroke-dasharray="5.5 1.3 9.7 1.5 8.2 1.2 4.1 1.3 8.5 1.9 7.4 1.4 7.2 1.4 7.2 2.0 5.2 1.6 9.6 2.0 5.1 2.1 9.0 1.0" stroke-dashoffset="2.7"/>
<path d="M482 403.98 Q485.5 403.98 485.5 406.98 L485.5 407.80" stroke="#262626" stroke-width="1.5" fill="none"/>
<path d="M485.5 407.80 Q485.5 411.80 482 411.80" stroke="#d0d0d0" stroke-width="1.5" fill="none"/>
<path d="M507 403.98 Q503.5 403.98 503.5 406.98 L503.5 408.80 Q503.5 411.80 507 411.80" stroke="#d6d6d6" stroke-width="1.5" fill="none"/>
<rect x="375" y="421.30" width="110.5" height="1.2" fill="#8c8c8c"/>
<rect x="375" y="423.72" width="110.5" height="1.2" fill="#727272"/>
<rect x="375" y="429.32" width="110.5" height="1" fill="#888888"/>
<rect x="503.5" y="421.30" width="126.5" height="1.2" fill="#8c8c8c"/>
<rect x="503.5" y="423.72" width="126.5" height="1.2" fill="#727272"/>
<rect x="503.5" y="429.32" width="126.5" height="1" fill="#888888"/>
<line x1="375" y1="419.10" x2="482" y2="419.10" stroke="#161616" stroke-width="2" stroke-dasharray="5.2 0.9 9.9 1.4 9.2 1.0 4.1 2.0 8.8 2.2 8.1 1.5 8.6 0.9 7.2 1.4 4.9 1.6 5.9 1.5 6.2 1.2 6.2 1.6" stroke-dashoffset="9.8"/>
<line x1="375" y1="419.10" x2="482" y2="419.10" stroke="#343434" stroke-width="1.6"/>
<line x1="375" y1="426.92" x2="482" y2="426.92" stroke="#c8c8c8" stroke-width="1.2"/>
<line x1="375" y1="426.92" x2="482" y2="426.92" stroke="#eeeeee" stroke-width="1.2" stroke-dasharray="9.6 2.0 9.0 1.2 9.9 1.2 4.7 1.5 8.4 1.3 7.9 1.2 9.8 1.4 6.9 1.5 9.2 2.2 7.2 1.4 7.7 0.9 6.6 2.0" stroke-dashoffset="7.8"/>
<line x1="507" y1="419.10" x2="630" y2="419.10" stroke="#161616" stroke-width="2" stroke-dasharray="4.4 2.0 6.3 2.2 6.2 1.1 7.3 2.0 6.6 2.0 8.3 1.3 5.8 1.5 6.4 1.3 7.9 2.0 7.5 1.0 5.3 1.3 7.7 1.0" stroke-dashoffset="0.8"/>
<line x1="507" y1="419.10" x2="630" y2="419.10" stroke="#343434" stroke-width="1.6"/>
<line x1="507" y1="426.92" x2="630" y2="426.92" stroke="#c8c8c8" stroke-width="1.2"/>
<line x1="507" y1="426.92" x2="630" y2="426.92" stroke="#eeeeee" stroke-width="1.2" stroke-dasharray="5.9 1.2 4.2 1.6 9.5 1.5 8.4 2.0 9.0 2.1 6.6 1.8 4.7 2.0 6.3 1.5 9.3 1.2 5.1 2.0 7.6 0.9 4.2 1.3" stroke-dashoffset="0.1"/>
<path d="M482 419.10 Q485.5 419.10 485.5 422.10 L485.5 422.92" stroke="#262626" stroke-width="1.5" fill="none"/>
<path d="M485.5 422.92 Q485.5 426.92 482 426.92" stroke="#d0d0d0" stroke-width="1.5" fill="none"/>
<path d="M507 419.10 Q503.5 419.10 503.5 422.10 L503.5 423.92 Q503.5 426.92 507 426.92" stroke="#d6d6d6" stroke-width="1.5" fill="none"/>
<rect x="375" y="436.42" width="110.5" height="1.2" fill="#8c8c8c"/>
<rect x="375" y="438.84" width="110.5" height="1.2" fill="#727272"/>
<rect x="375" y="444.44" width="110.5" height="1" fill="#888888"/>
<rect x="503.5" y="436.42" width="126.5" height="1.2" fill="#8c8c8c"/>
<rect x="503.5" y="438.84" width="126.5" height="1.2" fill="#727272"/>
<rect x="503.5" y="444.44" width="126.5" height="1" fill="#888888"/>
<line x1="375" y1="434.22" x2="482" y2="434.22" stroke="#161616" stroke-width="2" stroke-dasharray="9.0 1.1 5.6 1.3 7.1 1.4 7.8 1.7 6.6 0.9 9.9 1.8 4.5 1.4 8.5 2.2 4.4 0.8 6.9 1.4 9.4 2.0 6.0 1.4" stroke-dashoffset="5.8"/>
<line x1="375" y1="434.22" x2="482" y2="434.22" stroke="#343434" stroke-width="1.6"/>
<line x1="375" y1="442.04" x2="482" y2="442.04" stroke="#c8c8c8" stroke-width="1.2"/>
<line x1="375" y1="442.04" x2="482" y2="442.04" stroke="#eeeeee" stroke-width="1.2" stroke-dasharray="9.3 1.1 6.4 0.9 7.8 0.8 9.6 1.5 7.4 0.9 5.4 1.5 9.1 1.6 5.7 2.2 8.0 1.5 5.2 1.2 9.4 1.0 7.2 1.7" stroke-dashoffset="3.5"/>
<line x1="507" y1="434.22" x2="630" y2="434.22" stroke="#161616" stroke-width="2" stroke-dasharray="8.6 2.1 9.1 1.8 5.2 0.9 6.6 1.2 5.2 2.0 5.3 2.0 9.6 1.0 9.5 1.4 5.3 1.1 4.2 1.5 6.3 2.0 9.0 0.9" stroke-dashoffset="4.0"/>
<line x1="507" y1="434.22" x2="630" y2="434.22" stroke="#343434" stroke-width="1.6"/>
<line x1="507" y1="442.04" x2="630" y2="442.04" stroke="#c8c8c8" stroke-width="1.2"/>
<line x1="507" y1="442.04" x2="630" y2="442.04" stroke="#eeeeee" stroke-width="1.2" stroke-dasharray="6.3 1.0 5.5 1.2 8.2 1.3 4.7 1.1 6.7 1.6 5.5 1.8 5.3 1.7 7.7 1.0 8.5 1.4 7.2 1.6 7.8 1.4 4.3 1.9" stroke-dashoffset="8.6"/>
<path d="M482 434.22 Q485.5 434.22 485.5 437.22 L485.5 438.04" stroke="#262626" stroke-width="1.5" fill="none"/>
<path d="M485.5 438.04 Q485.5 442.04 482 442.04" stroke="#d0d0d0" stroke-width="1.5" fill="none"/>
<path d="M507 434.22 Q503.5 434.22 503.5 437.22 L503.5 439.04 Q503.5 442.04 507 442.04" stroke="#d6d6d6" stroke-width="1.5" fill="none"/>
<rect x="375" y="451.54" width="110.5" height="1.2" fill="#8c8c8c"/>
<rect x="375" y="453.96" width="110.5" height="1.2" fill="#727272"/>
<rect x="375" y="459.56" width="110.5" height="1" fill="#888888"/>
<rect x="503.5" y="451.54" width="126.5" height="1.2" fill="#8c8c8c"/>
<rect x="503.5" y="453.96" width="126.5" height="1.2" fill="#727272"/>
<rect x="503.5" y="459.56" width="126.5" height="1" fill="#888888"/>
<line x1="375" y1="449.34" x2="482" y2="449.34" stroke="#161616" stroke-width="2" stroke-dasharray="6.9 1.6 5.6 2.1 8.1 1.1 8.9 2.2 6.1 2.2 6.9 1.1 8.3 1.3 8.4 1.6 4.6 1.5 9.1 1.5 7.2 2.0 6.7 1.5" stroke-dashoffset="5.8"/>
<line x1="375" y1="449.34" x2="482" y2="449.34" stroke="#343434" stroke-width="1.6"/>
<line x1="375" y1="457.16" x2="482" y2="457.16" stroke="#c8c8c8" stroke-width="1.2"/>
<line x1="375" y1="457.16" x2="482" y2="457.16" stroke="#eeeeee" stroke-width="1.2" stroke-dasharray="8.9 1.1 4.6 1.9 7.3 1.2 9.4 2.0 7.2 2.2 9.0 1.8 5.7 0.8 8.1 1.8 6.1 1.5 7.4 1.1 8.2 1.6 6.3 1.0" stroke-dashoffset="5.5"/>
<line x1="507" y1="449.34" x2="630" y2="449.34" stroke="#161616" stroke-width="2" stroke-dasharray="5.9 1.8 5.0 1.4 5.2 1.4 7.5 0.9 4.3 1.5 5.2 1.5 5.0 0.9 7.2 2.1 9.2 1.5 6.4 0.9 5.7 1.2 9.6 1.0" stroke-dashoffset="9.5"/>
<line x1="507" y1="449.34" x2="630" y2="449.34" stroke="#343434" stroke-width="1.6"/>
<line x1="507" y1="457.16" x2="630" y2="457.16" stroke="#c8c8c8" stroke-width="1.2"/>
<line x1="507" y1="457.16" x2="630" y2="457.16" stroke="#eeeeee" stroke-width="1.2" stroke-dasharray="6.9 1.4 5.6 2.1 5.1 1.6 7.1 1.1 5.3 2.2 8.7 1.8 9.4 0.9 8.2 1.9 5.4 1.4 9.8 1.3 8.6 1.0 8.0 1.2" stroke-dashoffset="5.1"/>
<path d="M482 449.34 Q485.5 449.34 485.5 452.34 L485.5 453.16" stroke="#262626" stroke-width="1.5" fill="none"/>
<path d="M485.5 453.16 Q485.5 457.16 482 457.16" stroke="#d0d0d0" stroke-width="1.5" fill="none"/>
<path d="M507 449.34 Q503.5 449.34 503.5 452.34 L503.5 454.16 Q503.5 457.16 507 457.16" stroke="#d6d6d6" stroke-width="1.5" fill="none"/>
<rect x="375" y="466.66" width="110.5" height="1.2" fill="#8c8c8c"/>
<rect x="375" y="469.08" width="110.5" height="1.2" fill="#727272"/>
<rect x="375" y="474.68" width="110.5" height="1" fill="#888888"/>
<rect x="503.5" y="466.66" width="126.5" height="1.2" fill="#8c8c8c"/>
<rect x="503.5" y="469.08" width="126.5" height="1.2" fill="#727272"/>
<rect x="503.5" y="474.68" width="126.5" height="1" fill="#888888"/>
<line x1="375" y1="464.46" x2="482" y2="464.46" stroke="#161616" stroke-width="2" stroke-dasharray="6.2 2.0 8.5 1.5 8.1 1.4 8.8 1.2 7.3 1.6 6.3 0.9 5.0 1.7 5.3 1.9 7.0 2.1 9.1 1.8 6.2 0.9 7.3 1.8" stroke-dashoffset="9.2"/>
<line x1="375" y1="464.46" x2="482" y2="464.46" stroke="#343434" stroke-width="1.6"/>
<line x1="375" y1="472.28" x2="482" y2="472.28" stroke="#c8c8c8" stroke-width="1.2"/>
<line x1="375" y1="472.28" x2="482" y2="472.28" stroke="#eeeeee" stroke-width="1.2" stroke-dasharray="5.2 1.0 9.9 1.8 6.9 1.8 4.9 1.6 8.0 1.6 5.0 1.0 7.7 2.0 4.8 0.8 4.5 1.9 6.3 1.4 10.0 1.7 5.6 1.8" stroke-dashoffset="0.0"/>
<line x1="507" y1="464.46" x2="630" y2="464.46" stroke="#161616" stroke-width="2" stroke-dasharray="5.7 1.8 5.0 0.8 7.1 1.3 9.8 0.9 8.8 1.3 8.8 1.4 8.0 1.3 5.3 1.4 8.8 1.3 5.4 1.4 4.6 1.2 7.4 1.6" stroke-dashoffset="6.0"/>
<line x1="507" y1="464.46" x2="630" y2="464.46" stroke="#343434" stroke-width="1.6"/>
<line x1="507" y1="472.28" x2="630" y2="472.28" stroke="#c8c8c8" stroke-width="1.2"/>
<line x1="507" y1="472.28" x2="630" y2="472.28" stroke="#eeeeee" stroke-width="1.2" stroke-dasharray="5.7 0.8 4.2 1.3 5.2 1.6 5.6 1.9 7.6 1.7 8.4 1.5 6.6 1.2 4.4 1.9 7.0 0.9 9.6 1.6 7.7 1.4 4.8 2.2" stroke-dashoffset="1.7"/>
<path d="M482 464.46 Q485.5 464.46 485.5 467.46 L485.5 468.28" stroke="#262626" stroke-width="1.5" fill="none"/>
<path d="M485.5 468.28 Q485.5 472.28 482 472.28" stroke="#d0d0d0" stroke-width="1.5" fill="none"/>
<path d="M507 464.46 Q503.5 464.46 503.5 467.46 L503.5 469.28 Q503.5 472.28 507 472.28" stroke="#d6d6d6" stroke-width="1.5" fill="none"/>
<rect x="375" y="481.78" width="110.5" height="1.2" fill="#8c8c8c"/>
<rect x="375" y="484.20" width="110.5" height="1.2" fill="#727272"/>
<rect x="375" y="489.80" width="110.5" height="1" fill="#888888"/>
<rect x="503.5" y="481.78" width="126.5" height="1.2" fill="#8c8c8c"/>
<rect x="503.5" y="484.20" width="126.5" height="1.2" fill="#727272"/>
<rect x="503.5" y="489.80" width="126.5" height="1" fill="#888888"/>
<line x1="375" y1="479.58" x2="482" y2="479.58" stroke="#161616" stroke-width="2" stroke-dasharray="6.2 2.2 4.7 1.5 6.9 1.1 9.5 1.4 4.1 1.5 4.0 1.8 9.2 2.1 4.3 1.7 5.8 1.5 5.8 1.2 4.8 1.7 4.5 2.1" stroke-dashoffset="0.4"/>
<line x1="375" y1="479.58" x2="482" y2="479.58" stroke="#343434" stroke-width="1.6"/>
<line x1="375" y1="487.40" x2="482" y2="487.40" stroke="#c8c8c8" stroke-width="1.2"/>
<line x1="375" y1="487.40" x2="482" y2="487.40" stroke="#eeeeee" stroke-width="1.2" stroke-dasharray="9.8 1.1 4.5 1.8 7.2 1.9 7.1 1.7 4.5 1.7 7.1 2.1 4.0 0.9 8.1 2.1 6.5 1.8 7.4 1.3 6.8 1.6 4.2 1.2" stroke-dashoffset="7.4"/>
<line x1="507" y1="479.58" x2="630" y2="479.58" stroke="#161616" stroke-width="2" stroke-dasharray="5.5 1.5 5.5 1.3 7.9 1.8 9.7 1.5 5.2 1.3 4.4 1.1 7.5 1.7 5.4 1.1 4.6 1.1 7.0 1.2 9.3 1.6 6.0 1.4" stroke-dashoffset="0.4"/>
<line x1="507" y1="479.58" x2="630" y2="479.58" stroke="#343434" stroke-width="1.6"/>
<line x1="507" y1="487.40" x2="630" y2="487.40" stroke="#c8c8c8" stroke-width="1.2"/>
<line x1="507" y1="487.40" x2="630" y2="487.40" stroke="#eeeeee" stroke-width="1.2" stroke-dasharray="8.4 1.9 6.2 1.8 5.6 1.1 5.4 1.1 7.6 1.7 8.4 0.9 8.6 1.5 6.3 1.5 6.6 1.1 6.4 1.7 8.3 2.1 5.2 2.0" stroke-dashoffset="8.0"/>
<path d="M482 479.58 Q485.5 479.58 485.5 482.58 L485.5 483.40" stroke="#262626" stroke-width="1.5" fill="none"/>
<path d="M485.5 483.40 Q485.5 487.40 482 487.40" stroke="#d0d0d0" stroke-width="1.5" fill="none"/>
<path d="M507 479.58 Q503.5 479.58 503.5 482.58 L503.5 484.40 Q503.5 487.40 507 487.40" stroke="#d6d6d6" stroke-width="1.5" fill="none"/>
<defs><linearGradient id="barg" x1="0" y1="0" x2="0" y2="1"><stop offset="0" stop-color="#868686"/><stop offset="0.33" stop-color="#848484"/><stop offset="0.55" stop-color="#737373"/><stop offset="1" stop-color="#6e6e6e"/></linearGradient></defs>
<rect x="486.5" y="277" width="16.5" height="190" fill="url(#barg)"/>
<rect x="527" y="388" width="26" height="76" fill="#000" fill-opacity="0.1"/>
</g></g>
<rect x="552.5" y="208.8" width="252.5" height="253.4" fill="rgb(139,191,129)" fill-opacity="0.5"/>
<g clip-path="url(#semclip)"><rect x="552.5" y="290" width="70" height="175" fill="rgb(150,215,135)" fill-opacity="0.16"/></g>
<rect x="553" y="209.3" width="251.5" height="252.4" fill="none" stroke="rgb(120,175,110)" stroke-opacity="0.25" stroke-width="1"/>
<line x1="813.5" y1="175" x2="813.5" y2="530" stroke="#e4e4e4" stroke-width="1"/>
<rect x="580.5" y="385.5" width="75" height="75.5" fill="rgb(215,220,195)" fill-opacity="0.2"/>
<g stroke="rgb(168,228,226)" stroke-width="1.6" opacity="0.48">
<line x1="581" y1="388.0" x2="655" y2="388.0"/>
<line x1="581" y1="391.8" x2="655" y2="391.8"/>
<line x1="581" y1="395.6" x2="655" y2="395.6"/>
<line x1="581" y1="399.4" x2="655" y2="399.4"/>
<line x1="581" y1="403.2" x2="655" y2="403.2"/>
<line x1="581" y1="407.0" x2="655" y2="407.0"/>
<line x1="581" y1="410.8" x2="655" y2="410.8"/>
<line x1="581" y1="414.6" x2="655" y2="414.6"/>
<line x1="581" y1="418.4" x2="655" y2="418.4"/>
<line x1="581" y1="422.2" x2="655" y2="422.2"/>
<line x1="581" y1="426.0" x2="655" y2="426.0"/>
<line x1="581" y1="429.8" x2="655" y2="429.8"/>
<line x1="581" y1="433.6" x2="655" y2="433.6"/>
<line x1="581" y1="437.4" x2="655" y2="437.4"/>
<line x1="581" y1="441.2" x2="655" y2="441.2"/>
<line x1="581" y1="445.0" x2="655" y2="445.0"/>
<line x1="581" y1="448.8" x2="655" y2="448.8"/>
<line x1="581" y1="452.6" x2="655" y2="452.6"/>
<line x1="581" y1="456.4" x2="655" y2="456.4"/>
</g>
<rect x="580.5" y="385.5" width="75" height="75.5" fill="none" stroke="#9db2b4" stroke-width="1"/>
<path d="M613.2 423.3 H621.4 M617.3 419.2 V427.4" stroke="#4d93c8" stroke-width="1.2"/>
<circle cx="655" cy="443.6" r="1.3" fill="#e8201c"/>
<circle cx="671" cy="443.6" r="9.3" fill="#fff" stroke="#3496dc" stroke-width="1.7"/>
<text x="671" y="448.20000000000005" text-anchor="middle" font-family="Liberation Sans" font-size="13.5" fill="#7a7a7a">1</text>
<circle cx="665.5" cy="382.4" r="9.3" fill="#fff" stroke="#3496dc" stroke-width="1.7"/>
<text x="665.5" y="387.0" text-anchor="middle" font-family="Liberation Sans" font-size="13.5" fill="#7a7a7a">2</text>
<circle cx="788" cy="223.2" r="9.3" fill="#fff" stroke="#3496dc" stroke-width="1.7"/>
<text x="788" y="227.79999999999998" text-anchor="middle" font-family="Liberation Sans" font-size="13.5" fill="#7a7a7a">3</text>
<circle cx="378" cy="502" r="9.3" fill="#fff" stroke="#3496dc" stroke-width="1.7"/>
<text x="378" y="506.6" text-anchor="middle" font-family="Liberation Sans" font-size="13.5" fill="#7a7a7a">4</text>
<circle cx="474.2" cy="408.4" r="9.3" fill="#fff" stroke="#3496dc" stroke-width="1.7"/>
<text x="474.2" y="413.0" text-anchor="middle" font-family="Liberation Sans" font-size="13.5" fill="#7a7a7a">5</text>
<text x="349.5" y="198.5" font-family="Liberation Sans" font-size="11" fill="#3c3c3c" stroke="#3c3c3c" stroke-width="0.25" textLength="15.5" lengthAdjust="spacingAndGlyphs">880</text>
<text x="349.5" y="274.3" font-family="Liberation Sans" font-size="11" fill="#3c3c3c" stroke="#3c3c3c" stroke-width="0.25" textLength="15.5" lengthAdjust="spacingAndGlyphs">840</text>
<text x="349.5" y="350.0" font-family="Liberation Sans" font-size="11" fill="#3c3c3c" stroke="#3c3c3c" stroke-width="0.25" textLength="15.5" lengthAdjust="spacingAndGlyphs">800</text>
<text x="349.5" y="425.8" font-family="Liberation Sans" font-size="11" fill="#3c3c3c" stroke="#3c3c3c" stroke-width="0.25" textLength="15.5" lengthAdjust="spacingAndGlyphs">760</text>
<text x="349.5" y="501.6" font-family="Liberation Sans" font-size="11" fill="#3c3c3c" stroke="#3c3c3c" stroke-width="0.25" textLength="15.5" lengthAdjust="spacingAndGlyphs">720</text>
<text x="391.0" y="517" font-family="Liberation Sans" font-size="11" fill="#3c3c3c" stroke="#3c3c3c" stroke-width="0.25" textLength="20" lengthAdjust="spacingAndGlyphs">1400</text>
<text x="466.6" y="517" font-family="Liberation Sans" font-size="11" fill="#3c3c3c" stroke="#3c3c3c" stroke-width="0.25" textLength="20" lengthAdjust="spacingAndGlyphs">1440</text>
<text x="542.2" y="517" font-family="Liberation Sans" font-size="11" fill="#3c3c3c" stroke="#3c3c3c" stroke-width="0.25" textLength="20" lengthAdjust="spacingAndGlyphs">1480</text>
<text x="617.8" y="517" font-family="Liberation Sans" font-size="11" fill="#3c3c3c" stroke="#3c3c3c" stroke-width="0.25" textLength="20" lengthAdjust="spacingAndGlyphs">1520</text>
<text x="693.4" y="517" font-family="Liberation Sans" font-size="11" fill="#3c3c3c" stroke="#3c3c3c" stroke-width="0.25" textLength="20" lengthAdjust="spacingAndGlyphs">1560</text>
<text x="769.0" y="517" font-family="Liberation Sans" font-size="11" fill="#3c3c3c" stroke="#3c3c3c" stroke-width="0.25" textLength="20" lengthAdjust="spacingAndGlyphs">1600</text>
<text x="352.7" y="517" font-family="Liberation Sans" font-size="11" fill="#3c3c3c" stroke="#3c3c3c" stroke-width="0.25" textLength="13.3" lengthAdjust="spacingAndGlyphs">µm</text>
</svg>

  <!-- toolbar -->
<svg class="a" style="left:0;top:0" width="840" height="550" viewBox="0 0 840 550">
<rect x="324.5" y="174.5" width="19" height="18.5" rx="3" fill="#f3f3f3" stroke="#958c93" stroke-width="1.3"/>
<g transform="translate(324,174)" fill="#0c9a1c" stroke="#0c9a1c" stroke-width="1.8" stroke-linecap="butt"><path d="M3 3 L8 3 L3 8 Z" stroke-width="0.5"/><line x1="5" y1="5" x2="8.8" y2="8.8"/><path d="M17 3 L12 3 L17 8 Z" stroke-width="0.5"/><line x1="15" y1="5" x2="11.2" y2="8.8"/><path d="M3 16 L8 16 L3 11 Z" stroke-width="0.5"/><line x1="5" y1="14" x2="8.8" y2="10.2"/><path d="M17 16 L12 16 L17 11 Z" stroke-width="0.5"/><line x1="15" y1="14" x2="11.2" y2="10.2"/></g>
<rect x="324.5" y="195.5" width="19" height="18.5" rx="3" fill="#f3f3f3" stroke="#958c93" stroke-width="1.3"/>
<g transform="translate(324,195)" fill="#0c9a1c" stroke="#0c9a1c" stroke-width="1.8" stroke-linecap="butt"><path d="M9 8.5 L4.5 8.5 L9 4 Z" stroke-width="0.5"/><line x1="3.5" y1="3" x2="7" y2="6.5"/><path d="M11 8.5 L15.5 8.5 L11 4 Z" stroke-width="0.5"/><line x1="16.5" y1="3" x2="13" y2="6.5"/><path d="M9 10.5 L4.5 10.5 L9 15 Z" stroke-width="0.5"/><line x1="3.5" y1="16" x2="7" y2="12.5"/><path d="M11 10.5 L15.5 10.5 L11 15 Z" stroke-width="0.5"/><line x1="16.5" y1="16" x2="13" y2="12.5"/></g>
<rect x="324.5" y="216.5" width="19" height="18.5" rx="3" fill="#f3f3f3" stroke="#958c93" stroke-width="1.3"/>
<g transform="translate(324,216)"><rect x="2.5" y="2.5" width="15" height="14" fill="#e6f4e6" stroke="#8fd08f" stroke-width="1.5"/><g fill="#0c9a1c" stroke="#0c9a1c" stroke-width="1.6" stroke-linecap="round"><path d="M4.5 4.5 L8 4.5 L4.5 8 Z" stroke-width="0.6"/><line x1="5.5" y1="5.5" x2="8" y2="8"/><path d="M15.5 4.5 L12 4.5 L15.5 8 Z" stroke-width="0.6"/><line x1="14.5" y1="5.5" x2="12" y2="8"/><path d="M4.5 14.5 L8 14.5 L4.5 11 Z" stroke-width="0.6"/><line x1="5.5" y1="13.5" x2="8" y2="11"/><path d="M15.5 14.5 L12 14.5 L15.5 11 Z" stroke-width="0.6"/><line x1="14.5" y1="13.5" x2="12" y2="11"/></g></g>
<rect x="324.5" y="237.5" width="19" height="18.5" rx="3" fill="#f3f3f3" stroke="#958c93" stroke-width="1.3"/>
<g transform="translate(324,237)"><path d="M14.5 16 C14.5 11 12 8.5 8 8.5" stroke="#0c9a1c" stroke-width="2.6" fill="none" stroke-linecap="round"/><path d="M3.5 8.5 L9.5 3.5 L9.5 13.5 Z" fill="#0c9a1c"/></g>
<rect x="324.5" y="258.5" width="19" height="18.5" rx="3" fill="#f3f3f3" stroke="#958c93" stroke-width="1.3"/>
<g transform="translate(324,258)"><rect x="3.5" y="3.5" width="13" height="12" fill="#fff" stroke="#0c9a1c" stroke-width="2"/><rect x="7.5" y="7.2" width="5" height="4.6" fill="#fff" stroke="#0c9a1c" stroke-width="1.8"/></g>
<rect x="324.5" y="422.5" width="19" height="18.5" rx="3" fill="#f3f3f3" stroke="#958c93" stroke-width="1.3"/><g transform="translate(324,422)"><line x1="11.5" y1="11.5" x2="15.5" y2="15.5" stroke="#5a3a1c" stroke-width="2.6" stroke-linecap="round"/><circle cx="8.3" cy="8.3" r="5" fill="#e8eef8" stroke="#101418" stroke-width="2"/><path d="M5.8 8.3 H10.8 M8.3 5.8 V10.8" stroke="#1c2c8a" stroke-width="2"/></g>
<rect x="324.5" y="443.5" width="19" height="18.5" rx="3" fill="#f3f3f3" stroke="#958c93" stroke-width="1.3"/><g transform="translate(324,443)"><line x1="11.5" y1="11.5" x2="15.5" y2="15.5" stroke="#5a3a1c" stroke-width="2.6" stroke-linecap="round"/><circle cx="8.3" cy="8.3" r="5" fill="#e8eef8" stroke="#101418" stroke-width="2"/><path d="M5.8 8.3 H10.8" stroke="#1c2c8a" stroke-width="2"/></g>
<rect x="324.5" y="464.5" width="19" height="18.5" rx="3" fill="#f3f3f3" stroke="#958c93" stroke-width="1.3"/><g transform="translate(324,464)"><line x1="11.5" y1="11.5" x2="15.5" y2="15.5" stroke="#5a3a1c" stroke-width="2.6" stroke-linecap="round"/><circle cx="8.3" cy="8.3" r="5" fill="#e8eef8" stroke="#101418" stroke-width="2"/><path d="M8.3 4.8 L10.5 7.5 L6.1 7.5 Z M8.3 11.8 L10.5 9.1 L6.1 9.1 Z" fill="#1c2c8a"/></g>
<rect x="324.5" y="485.5" width="19" height="18.5" rx="3" fill="#f3f3f3" stroke="#958c93" stroke-width="1.3"/><g transform="translate(324,485)"><line x1="11.5" y1="11.5" x2="15.5" y2="15.5" stroke="#5a3a1c" stroke-width="2.6" stroke-linecap="round"/><circle cx="8.3" cy="8.3" r="5" fill="#d6f2f6" stroke="#101418" stroke-width="2"/><circle cx="8.3" cy="8.3" r="1.8" fill="none" stroke="#f4ffff" stroke-width="1"/></g>
<rect x="324.5" y="506.5" width="19" height="18.5" rx="3" fill="#f3f3f3" stroke="#958c93" stroke-width="1.3"/>
</svg>
</div>
<div id="frame"></div>
</div>
</body></html>
